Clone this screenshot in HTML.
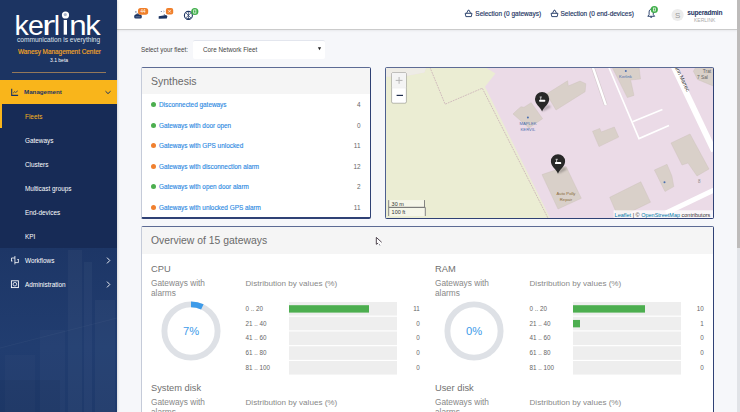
<!DOCTYPE html>
<html><head><meta charset="utf-8">
<style>
*{margin:0;padding:0;box-sizing:border-box}
html,body{width:740px;height:412px;overflow:hidden;background:#f6f7fa;font-family:"Liberation Sans",sans-serif;position:relative}
.a{position:absolute;white-space:nowrap;line-height:1}
#side{position:absolute;left:0;top:0;width:117px;height:412px;background:#1c3462;overflow:hidden;box-shadow:1px 0 2px rgba(0,0,0,0.12);z-index:2}
#top{position:absolute;left:117px;top:0;width:620px;height:30px;background:#fff;border-bottom:1px solid #cbcbcb;box-shadow:0 1px 2px rgba(0,0,0,0.06)}
#sb{position:absolute;left:737px;top:0;width:3px;height:412px;background:#e1e3e7}
#sbt{position:absolute;left:737px;top:0;width:3px;height:248px;background:#bdbbba}
.panel{position:absolute;background:#fff;border:1px solid #c5cbd9;border-top-color:#5d6b94;border-right:1.5px solid #2f4175;border-bottom:2px solid #2f4175;border-radius:2px;overflow:hidden}
.ph{position:absolute;left:0;top:0;right:0;background:#f5f5f5}
.lnk{color:#2a88e2;-webkit-text-stroke:0.12px #2a88e2}
.dot{position:absolute;width:5px;height:5px;border-radius:50%}
.g{background:#4cae4f}.o{background:#f0802f}
.num{color:#666;text-align:right}
.track{position:absolute;height:14px;background:#eeeeee}
.ttl{color:#707070}.sub{color:#888}.pct{color:#3d9be9}.lab{color:#666}
.mi{font-size:6.4px;color:#fff}.sel{font-size:6.5px;color:#1c3462;-webkit-text-stroke:0.15px #1c3462}
.bar{position:absolute;left:0;top:3px;height:7.5px;background:#4cae4f}
</style></head><body>
<div id="side">
  <div style="position:absolute;left:0;top:248px;width:117px;height:164px;background:linear-gradient(180deg,#1d3666 0%,#213d70 60%,#1f3a6b 100%)"></div>
  <svg class="a" style="left:0;top:248px" width="117" height="164" viewBox="0 248 117 164">
    <g fill="#fff">
      <rect x="68" y="250" width="14" height="162" opacity="0.03"/>
      <rect x="84" y="262" width="8" height="150" opacity="0.035"/>
      <rect x="95" y="300" width="20" height="112" opacity="0.03"/>
      <rect x="40" y="330" width="25" height="82" opacity="0.025"/>
      <rect x="5" y="355" width="30" height="57" opacity="0.02"/>
    </g>
    <path d="M0,348 L117,318" stroke="#fff" stroke-opacity="0.035" stroke-width="1"/>
    <rect x="0" y="380" width="60" height="32" fill="#000" opacity="0.04"/>
  </svg>
  <svg class="a" style="left:0;top:0" width="117" height="80" viewBox="0 0 117 80">
    <g font-family="Liberation Sans" font-size="28.5" fill="#fff">
      <text transform="translate(14.4,34.7)">k</text><text transform="translate(28,34.7)">e</text><text transform="translate(41.9,34.7) scale(1.4,1)">r</text><text transform="translate(53.7,34.7)">l</text><text transform="translate(69.2,34.7) scale(1.1,1)">n</text><text transform="translate(85.3,34.7) scale(1.08,1)">k</text>
    </g>
    <rect x="63.7" y="20" width="3.3" height="14.7" fill="#fff"/>
    <circle cx="65.5" cy="15" r="3.6" fill="#fff"/>
    <circle cx="65.3" cy="14.6" r="1.6" fill="#aab6cc"/>
  </svg>
  <div class="a" style="left:17px;top:37px;font-size:6.6px;color:#dfe3ec">communication is everything</div>
  <div class="a" style="left:18px;top:49.3px;font-size:6.4px;color:#f5a623;-webkit-text-stroke:0.15px #f5a623">Wanesy Management Center</div>
  <div class="a" style="left:50px;top:58px;font-size:5px;color:#fff">3.1 beta</div>
  <div style="position:absolute;left:12px;top:72px;width:94px;height:1px;background:#94785a"></div>
  <div style="position:absolute;left:0;top:80px;width:117px;height:24px;background:#f9b51b"></div>
  <div class="a" style="left:24px;top:88.5px;font-size:6.2px;color:#1c3462;font-weight:bold">Management</div>
  <div style="position:absolute;left:0;top:104px;width:117px;height:144px;background:#172b56"></div>
  <div style="position:absolute;left:0;top:104px;width:2px;height:24px;background:#f9b51b"></div>
  <div class="a mi" style="left:25px;top:114px;color:#f9b51b">Fleets</div>
  <div class="a mi" style="left:25px;top:138px">Gateways</div>
  <div class="a mi" style="left:25px;top:162px">Clusters</div>
  <div class="a mi" style="left:25px;top:186px">Multicast groups</div>
  <div class="a mi" style="left:25px;top:210px">End-devices</div>
  <div class="a mi" style="left:25px;top:234px">KPI</div>
  <div class="a mi" style="left:25px;top:258px">Workflows</div>
  <div class="a mi" style="left:25px;top:282px">Administration</div>
  <svg class="a" style="left:0;top:80px" width="117" height="220" viewBox="0 80 117 220">
    <g fill="none" stroke="#1c3462" stroke-width="1.1">
      <path d="M11.7,88.8 V95.4 H18.1"/>
      <path d="M13.2,93 L14.8,91.6 L15.6,92.5 L17.8,90.8" stroke-width="0.8"/>
      <path d="M105.5,91.2 L108,93.6 L110.6,91.2" stroke-width="1"/>
    </g>
    <g fill="none" stroke="#fff" stroke-width="0.9">
      <path d="M107,257.6 L109.8,260.5 L107,263.4"/>
      <path d="M107,281.6 L109.8,284.5 L107,287.4"/>
      <rect x="11.4" y="280.8" width="7" height="6.8"/>
      <circle cx="14.9" cy="284.2" r="1.8" stroke-width="0.8"/>
      <path d="M14.9,256 V264.4 M11.5,258 H14.9 M14.9,262.6 H18.4 M11.5,258 V261 M18.4,259.5 V262.6 M12.5,261 H11 M17.3,259.5 H18.8" stroke-width="0.8"/>
    </g>
  </svg>
</div>
<div id="top"></div>
<svg class="a" style="left:0;top:0" width="740" height="29" viewBox="0 0 740 29">
  <!-- icon 1 -->
  <rect x="134.2" y="14.6" width="7.6" height="4" rx="1.6" fill="#1c3462"/>
  <circle cx="135.9" cy="11.9" r="0.6" fill="#1c3462"/>
  <path d="M135.5,14.8 L137,13.6 H138.5 L139.2,14.8 Z" fill="#1c3462"/>
  <rect x="135.5" y="16.6" width="5" height="0.6" fill="#8fa0c0"/>
  <rect x="138" y="7.9" width="10.2" height="6.8" rx="2.6" fill="#f07f2a"/>
  <text x="143.1" y="12.9" font-size="4.6" fill="#fff" text-anchor="middle" font-family="Liberation Sans" >44</text>
  <!-- icon 2 -->
  <path d="M158.7,16.2 L166.3,14.9 L167.3,16.5 L166.8,18.6 L158.7,18.8 Z" fill="#1c3462"/>
  <circle cx="161.3" cy="11.5" r="0.6" fill="#5a6e98"/>
  <path d="M163,10.8 L164.7,11.5 L163,12.2" stroke="#a7b0c6" stroke-width="0.5" fill="none"/>
  <path d="M164.3,14 V15.5" stroke="#1c3462" stroke-width="0.6"/>
  <rect x="165.9" y="8.1" width="7.3" height="6.3" rx="2" fill="#f07f2a"/>
  <path d="M168.2,9.9 L170.9,12.6 M170.9,9.9 L168.2,12.6" stroke="#fff" stroke-width="0.7"/>
  <!-- icon 3 -->
  <circle cx="188.4" cy="15.4" r="4" fill="none" stroke="#1c3462" stroke-width="1.1"/>
  <path d="M185.8,12.8 L191,18 M191,12.8 L185.8,18 M188.4,11.5 V19.3" stroke="#1c3462" stroke-width="0.7"/>
  <rect x="186.5" y="18.4" width="3.8" height="1.4" fill="#1c3462"/>
  <circle cx="194.8" cy="11.5" r="3.6" fill="#3fae49"/>
  <rect x="193.7" y="9.9" width="2.2" height="3.2" fill="none" stroke="#fff" stroke-width="0.7"/>
  <!-- baskets -->
  <g fill="none" stroke="#1c3462" stroke-width="0.9">
    <path d="M465.2,13.3 H472 L471.3,16.6 H465.9 Z"/>
    <path d="M466.6,13.3 L468.1,10.2 H469.1 L470.6,13.3"/>
    <path d="M551.1,13.3 H557.9 L557.2,16.6 H551.8 Z"/>
    <path d="M552.5,13.3 L554,10.2 H555 L556.5,13.3"/>
  </g>
  <!-- bell -->
  <path d="M647.8,16.3 H654.6 L653.3,14.6 V12 C653.3,10.3 652.3,9.2 651.2,9.2 C650.1,9.2 649.1,10.3 649.1,12 V14.6 Z" fill="none" stroke="#1c3462" stroke-width="0.9"/>
  <path d="M650.3,17.2 H652.1" stroke="#1c3462" stroke-width="1"/>
  <circle cx="654.3" cy="9.5" r="3.6" fill="#3fae49"/>
  <rect x="653.3" y="8" width="2" height="3" fill="none" stroke="#fff" stroke-width="0.7"/>
  <!-- avatar -->
  <circle cx="677.6" cy="15" r="6.1" fill="#ececec"/>
  <text x="677.6" y="18" font-size="8" fill="#9a9a9a" text-anchor="middle" font-family="Liberation Sans">S</text>
</svg>
<div class="a sel" style="left:475.3px;top:10.8px">Selection (0 gateways)</div>
<div class="a sel" style="left:560.5px;top:10.8px">Selection (0 end-devices)</div>
<div class="a" style="left:687.3px;top:10.3px;font-size:6.6px;color:#1c3462;font-weight:bold;letter-spacing:-0.25px">superadmin</div>
<div class="a" style="left:694px;top:17.6px;font-size:5px;color:#aaa">KERLINK</div>
<div id="sb"></div><div id="sbt"></div>

<div class="a" style="left:141px;top:46.6px;font-size:6.3px;color:#444">Select your fleet:</div>
<div style="position:absolute;left:192.7px;top:39.5px;width:132px;height:19.3px;background:#fff;border-radius:2px;border-top:1px solid #e3e6ee"></div>
<svg class="a" style="left:317px;top:46px" width="5" height="5" viewBox="0 0 5 5"><path d="M0.9,1.2 H4.1 L2.5,4.3 Z" fill="#222"/></svg>
<div class="a" style="left:203px;top:46.6px;font-size:6.3px;color:#444">Core Network Fleet</div>

<div class="panel" style="left:141px;top:67px;width:230px;height:152px">
  <div class="ph" style="height:26px"></div>
  <div class="a" style="left:9px;top:8px;font-size:10.5px;color:#6a6a6a">Synthesis</div>
</div>

<div class="panel" style="left:385px;top:67px;width:329px;height:152px;background:#ebdbe7;border-left-color:#4d5f8f"></div>
<!--MAP-->
<svg class="a" style="left:386px;top:68px" width="327" height="150" viewBox="386 68 327 150">
<rect x="386" y="68" width="327" height="150" fill="#ebdbe7"/>
<polygon points="386,76.8 407,75.7 424.3,72.5 426.5,67 485,67 495.4,73.5 485,86.7 550,218 386,218" fill="#ebedd3"/>
<polygon points="386,67 426.5,67 424.3,72.5 407,75.7 386,76.8" fill="#eeece6"/>
<polyline points="429.8,67 445.1,104.2 482.3,88.2 548.4,219" fill="none" stroke="#c9afb6" stroke-width="0.8" stroke-dasharray="1.8 0.9"/>
<g fill="#d9d0c9" stroke="#cbbfb8" stroke-width="0.4">
<polygon points="513,114 517.4,109.7 521,106.7 524,107.3 531.2,102.7 542.6,118.7 529,128"/>
<polygon points="546.5,94 567.6,80.8 568.3,86 580,81.1 585.8,83.7 585.1,91.7 556,110"/>
<polygon points="592.5,131.3 599.8,128.4 601.2,132 614.3,127 618.7,137.1 599,146.6"/>
<polygon points="612,67 639,67 640.5,79 630.6,80 634,95.4 627.3,97.6 618.6,80"/>
<polygon points="696,67 714,67 714,86.3 697.6,79.5 693.4,71.2"/>
<polygon points="542,174.6 566,166.5 581.3,198.3 558,209"/>
<polygon points="671,143 690,134 709,169 697,176 688,163 682,165"/>
<polygon points="654.4,170 667,164.3 671.9,176 673.8,186.6 665,191.5"/>
<polygon points="609.7,197.3 640.8,181.8 650.5,202.2 618.5,217.7"/>
</g>
<g stroke-linecap="butt" fill="none">
<line x1="592.7" y1="67" x2="605.8" y2="105.2" stroke="#d4c8cc" stroke-width="3.6"/>
<line x1="592.7" y1="67" x2="605.8" y2="105.2" stroke="#fff" stroke-width="2.4"/>
<polyline points="608.7,67 639,138.6 669,125.5" stroke="#fff" stroke-width="1.6"/>
<line x1="632.5" y1="121.8" x2="662.4" y2="109.5" stroke="#fff" stroke-width="1.6"/>
<line x1="673.5" y1="66" x2="714" y2="151" stroke="#fff" stroke-width="6"/>
<line x1="666" y1="213" x2="714" y2="190" stroke="#fff" stroke-width="5"/>
</g>
<circle cx="527.9" cy="117.5" r="1" fill="#4b6fb0"/>
<circle cx="625.8" cy="71" r="1" fill="#4b6fb0"/>
<circle cx="664.5" cy="182.3" r="1" fill="#4b6fb0"/>
<text x="528" y="125" font-size="4.2" fill="#4b6fb0" text-anchor="middle" font-family="Liberation Sans">MAPLEK</text>
<text x="528" y="130.5" font-size="4.2" fill="#4b6fb0" text-anchor="middle" font-family="Liberation Sans">KERVIL</text>
<text x="625.5" y="77.5" font-size="4.2" fill="#4b6fb0" text-anchor="middle" font-family="Liberation Sans">Kerlink</text>
<text x="566" y="194.5" font-size="4.2" fill="#8a6a3a" text-anchor="middle" font-family="Liberation Sans">Auto Polly</text>
<text x="566" y="200.5" font-size="4.2" fill="#8a6a3a" text-anchor="middle" font-family="Liberation Sans">Repair</text>
<text x="702.8" y="72.8" font-size="4.8" fill="#666" font-family="Liberation Sans">Trat</text>
<text x="697" y="78.6" font-size="4.8" fill="#666" font-family="Liberation Sans">7 Sal</text>
<text x="0" y="0" font-size="5.5" fill="#2a2a2a" font-family="Liberation Sans" transform="translate(674.6,66.9) rotate(64.5)">ann Marrec</text>
<text x="698" y="183" font-size="4.5" fill="#888" font-family="Liberation Sans">8</text>
<!-- markers -->
<defs><filter id="bl" x="-50%" y="-50%" width="200%" height="200%"><feGaussianBlur stdDeviation="0.9"/></filter></defs>
<g transform="translate(542.1,111.4)">
<path d="M0.5,0 L9,-4.5 L6.5,-6.5 L1,-3 Z" fill="rgba(0,0,0,0.28)" filter="url(#bl)"/>
<path d="M0,0 C-2,-4.4 -7.1,-7.4 -7.1,-12.4 A7.1,7.1 0 1 1 7.1,-12.4 C7.1,-7.4 2,-4.4 0,0 Z" fill="#282828"/>
<rect x="-3" y="-11.6" width="6.2" height="2" rx="0.7" fill="#fff"/>
<path d="M-1.4,-11.6 V-14.2 M-2.4,-14.4 H-0.2" stroke="#fff" stroke-width="0.7" fill="none"/>
</g>
<g transform="translate(558,173.7)">
<path d="M0.5,0 L9,-4.5 L6.5,-6.5 L1,-3 Z" fill="rgba(0,0,0,0.28)" filter="url(#bl)"/>
<path d="M0,0 C-2,-4.4 -7.1,-7.4 -7.1,-12.4 A7.1,7.1 0 1 1 7.1,-12.4 C7.1,-7.4 2,-4.4 0,0 Z" fill="#282828"/>
<rect x="-3" y="-11.6" width="6.2" height="2" rx="0.7" fill="#fff"/>
<path d="M-1.4,-11.6 V-14.2 M-2.4,-14.4 H-0.2" stroke="#fff" stroke-width="0.7" fill="none"/>
</g>
<!-- zoom control -->
<rect x="391.6" y="72.6" width="14.8" height="30.6" rx="1.5" fill="#fff" stroke="rgba(0,0,0,0.25)" stroke-width="1"/>
<line x1="391.6" y1="87.8" x2="406.4" y2="87.8" stroke="#ddd" stroke-width="0.6"/>
<rect x="392.1" y="73" width="13.8" height="14.5" fill="#f4f4f4"/>
<path d="M395.7,80.4 H402.5 M399.1,77 V83.8" stroke="#b5b5b5" stroke-width="1"/>
<rect x="396.6" y="94.8" width="6.4" height="1.2" fill="#1f2d4d"/>
<!-- scale -->
<rect x="388.2" y="200.1" width="36.5" height="7.3" fill="rgba(255,255,255,0.5)"/>
<rect x="388.2" y="207.4" width="37.3" height="8.6" fill="rgba(255,255,255,0.5)"/>
<path d="M388.7,200.1 V207.4 H424.5 V200.1" fill="none" stroke="#777" stroke-width="0.9"/>
<path d="M388.7,207.4 V216 M388.7,207.4 H425.3 V216" fill="none" stroke="#777" stroke-width="0.9"/>
<text x="391.6" y="206" font-size="5.5" fill="#333" font-family="Liberation Sans">30 m</text>
<text x="391.6" y="214.3" font-size="5.5" fill="#333" font-family="Liberation Sans">100 ft</text>
<!-- attribution -->
<rect x="613.6" y="210.3" width="99.4" height="8" fill="rgba(255,255,255,0.75)"/>
<text x="614.6" y="216.6" font-size="5.5" fill="#333" font-family="Liberation Sans"><tspan fill="#0078a8">Leaflet</tspan> | © <tspan fill="#0078a8">OpenStreetMap</tspan> contributors</text>
</svg>

<!--/MAP-->

<div class="panel" style="left:141px;top:226px;width:573px;height:200px">
  <div class="ph" style="height:27px"></div>
  <div class="a" style="left:9px;top:9px;font-size:10.4px;color:#6a6a6a">Overview of 15 gateways</div>
</div>
<!--SYNTH-->
<div class="dot g" style="left:151px;top:102.3px"></div>
<div class="a lnk" style="left:159px;top:102.4px;font-size:6.4px">Disconnected gateways</div>
<div class="a num" style="left:320px;width:40.5px;top:102.4px;font-size:6.4px">4</div>
<div class="dot g" style="left:151px;top:122.8px"></div>
<div class="a lnk" style="left:159px;top:122.9px;font-size:6.4px">Gateways with door open</div>
<div class="a num" style="left:320px;width:40.5px;top:122.9px;font-size:6.4px">0</div>
<div class="dot o" style="left:151px;top:143.3px"></div>
<div class="a lnk" style="left:159px;top:143.4px;font-size:6.4px">Gateways with GPS unlocked</div>
<div class="a num" style="left:320px;width:40.5px;top:143.4px;font-size:6.4px">11</div>
<div class="dot o" style="left:151px;top:163.8px"></div>
<div class="a lnk" style="left:159px;top:163.9px;font-size:6.4px">Gateways with disconnection alarm</div>
<div class="a num" style="left:320px;width:40.5px;top:163.9px;font-size:6.4px">12</div>
<div class="dot g" style="left:151px;top:184.3px"></div>
<div class="a lnk" style="left:159px;top:184.4px;font-size:6.4px">Gateways with open door alarm</div>
<div class="a num" style="left:320px;width:40.5px;top:184.4px;font-size:6.4px">2</div>
<div class="dot o" style="left:151px;top:204.8px"></div>
<div class="a lnk" style="left:159px;top:204.9px;font-size:6.4px">Gateways with unlocked GPS alarm</div>
<div class="a num" style="left:320px;width:40.5px;top:204.9px;font-size:6.4px">11</div>
<!--OV-->
<div class="a ttl" style="left:151px;top:264.6px;font-size:9.3px">CPU</div>
<div class="a sub" style="left:151px;top:278.1px;font-size:8.3px;line-height:10px;white-space:normal;width:70px">Gateways with<br>alarms</div>
<div class="a sub" style="left:245.5px;top:279.6px;font-size:8.1px">Distribution by values (%)</div>
<svg class="a" style="left:161.2px;top:301.1px" width="60" height="60" viewBox="0 0 60 60"><circle cx="30" cy="30" r="26.6" fill="none" stroke="#dee1e6" stroke-width="5.9"/><circle cx="30" cy="30" r="26.6" fill="none" stroke="#3d9be9" stroke-width="5.9" stroke-dasharray="11.70 200" transform="rotate(-90 30 30)"/></svg>
<div class="a pct" style="left:171.2px;width:40px;text-align:center;top:326.2px;font-size:11.2px">7%</div>
<div class="a lab" style="left:245.6px;top:305.9px;font-size:6.3px">0 .. 20</div>
<div class="a lab" style="left:389.7px;width:30px;text-align:right;top:305.9px;font-size:6.3px">11</div>
<div class="a lab" style="left:245.6px;top:320.6px;font-size:6.3px">21 .. 40</div>
<div class="a lab" style="left:389.7px;width:30px;text-align:right;top:320.6px;font-size:6.3px">0</div>
<div class="a lab" style="left:245.6px;top:335.4px;font-size:6.3px">41 .. 60</div>
<div class="a lab" style="left:389.7px;width:30px;text-align:right;top:335.4px;font-size:6.3px">0</div>
<div class="a lab" style="left:245.6px;top:350.1px;font-size:6.3px">61 .. 80</div>
<div class="a lab" style="left:389.7px;width:30px;text-align:right;top:350.1px;font-size:6.3px">0</div>
<div class="a lab" style="left:245.6px;top:364.9px;font-size:6.3px">81 .. 100</div>
<div class="a lab" style="left:389.7px;width:30px;text-align:right;top:364.9px;font-size:6.3px">0</div>
<svg class="a" style="left:288.8px;top:302.0px" width="108" height="74" viewBox="0 0 108 74"><rect x="0" y="0.00" width="108" height="13.6" fill="#eeeeee"/><rect x="0" y="3.20" width="80" height="7.4" fill="#4cae4f"/><rect x="0" y="14.75" width="108" height="13.6" fill="#eeeeee"/><rect x="0" y="29.50" width="108" height="13.6" fill="#eeeeee"/><rect x="0" y="44.25" width="108" height="13.6" fill="#eeeeee"/><rect x="0" y="59.00" width="108" height="13.6" fill="#eeeeee"/></svg>
<div class="a ttl" style="left:435px;top:264.6px;font-size:9.3px">RAM</div>
<div class="a sub" style="left:435px;top:278.1px;font-size:8.3px;line-height:10px;white-space:normal;width:70px">Gateways with<br>alarms</div>
<div class="a sub" style="left:529.5px;top:279.6px;font-size:8.1px">Distribution by values (%)</div>
<svg class="a" style="left:444.2px;top:301.1px" width="60" height="60" viewBox="0 0 60 60"><circle cx="30" cy="30" r="26.6" fill="none" stroke="#dee1e6" stroke-width="5.9"/></svg>
<div class="a pct" style="left:454.2px;width:40px;text-align:center;top:326.2px;font-size:11.2px">0%</div>
<div class="a lab" style="left:529.6px;top:305.9px;font-size:6.3px">0 .. 20</div>
<div class="a lab" style="left:673.7px;width:30px;text-align:right;top:305.9px;font-size:6.3px">10</div>
<div class="a lab" style="left:529.6px;top:320.6px;font-size:6.3px">21 .. 40</div>
<div class="a lab" style="left:673.7px;width:30px;text-align:right;top:320.6px;font-size:6.3px">1</div>
<div class="a lab" style="left:529.6px;top:335.4px;font-size:6.3px">41 .. 60</div>
<div class="a lab" style="left:673.7px;width:30px;text-align:right;top:335.4px;font-size:6.3px">0</div>
<div class="a lab" style="left:529.6px;top:350.1px;font-size:6.3px">61 .. 80</div>
<div class="a lab" style="left:673.7px;width:30px;text-align:right;top:350.1px;font-size:6.3px">0</div>
<div class="a lab" style="left:529.6px;top:364.9px;font-size:6.3px">81 .. 100</div>
<div class="a lab" style="left:673.7px;width:30px;text-align:right;top:364.9px;font-size:6.3px">0</div>
<svg class="a" style="left:572.8px;top:302.0px" width="108" height="74" viewBox="0 0 108 74"><rect x="0" y="0.00" width="108" height="13.6" fill="#eeeeee"/><rect x="0" y="3.20" width="72" height="7.4" fill="#4cae4f"/><rect x="0" y="14.75" width="108" height="13.6" fill="#eeeeee"/><rect x="0" y="17.95" width="7" height="7.4" fill="#4cae4f"/><rect x="0" y="29.50" width="108" height="13.6" fill="#eeeeee"/><rect x="0" y="44.25" width="108" height="13.6" fill="#eeeeee"/><rect x="0" y="59.00" width="108" height="13.6" fill="#eeeeee"/></svg>
<div class="a ttl" style="left:151px;top:383.5px;font-size:9.3px">System disk</div>
<div class="a sub" style="left:151px;top:397.0px;font-size:8.3px;line-height:10px;white-space:normal;width:70px">Gateways with<br>alarms</div>
<div class="a sub" style="left:245.5px;top:398.5px;font-size:8.1px">Distribution by values (%)</div>
<svg class="a" style="left:161.2px;top:420.0px" width="60" height="60" viewBox="0 0 60 60"><circle cx="30" cy="30" r="26.6" fill="none" stroke="#dee1e6" stroke-width="5.9"/></svg>
<div class="a pct" style="left:171.2px;width:40px;text-align:center;top:445.1px;font-size:11.2px">0%</div>
<div class="a lab" style="left:245.6px;top:424.8px;font-size:6.3px">0 .. 20</div>
<div class="a lab" style="left:389.7px;width:30px;text-align:right;top:424.8px;font-size:6.3px">0</div>
<div class="a lab" style="left:245.6px;top:439.5px;font-size:6.3px">21 .. 40</div>
<div class="a lab" style="left:389.7px;width:30px;text-align:right;top:439.5px;font-size:6.3px">0</div>
<div class="a lab" style="left:245.6px;top:454.3px;font-size:6.3px">41 .. 60</div>
<div class="a lab" style="left:389.7px;width:30px;text-align:right;top:454.3px;font-size:6.3px">0</div>
<div class="a lab" style="left:245.6px;top:469.0px;font-size:6.3px">61 .. 80</div>
<div class="a lab" style="left:389.7px;width:30px;text-align:right;top:469.0px;font-size:6.3px">0</div>
<div class="a lab" style="left:245.6px;top:483.8px;font-size:6.3px">81 .. 100</div>
<div class="a lab" style="left:389.7px;width:30px;text-align:right;top:483.8px;font-size:6.3px">0</div>
<svg class="a" style="left:288.8px;top:420.9px" width="108" height="74" viewBox="0 0 108 74"><rect x="0" y="0.00" width="108" height="13.6" fill="#eeeeee"/><rect x="0" y="14.75" width="108" height="13.6" fill="#eeeeee"/><rect x="0" y="29.50" width="108" height="13.6" fill="#eeeeee"/><rect x="0" y="44.25" width="108" height="13.6" fill="#eeeeee"/><rect x="0" y="59.00" width="108" height="13.6" fill="#eeeeee"/></svg>
<div class="a ttl" style="left:435px;top:383.5px;font-size:9.3px">User disk</div>
<div class="a sub" style="left:435px;top:397.0px;font-size:8.3px;line-height:10px;white-space:normal;width:70px">Gateways with<br>alarms</div>
<div class="a sub" style="left:529.5px;top:398.5px;font-size:8.1px">Distribution by values (%)</div>
<svg class="a" style="left:444.2px;top:420.0px" width="60" height="60" viewBox="0 0 60 60"><circle cx="30" cy="30" r="26.6" fill="none" stroke="#dee1e6" stroke-width="5.9"/></svg>
<div class="a pct" style="left:454.2px;width:40px;text-align:center;top:445.1px;font-size:11.2px">0%</div>
<div class="a lab" style="left:529.6px;top:424.8px;font-size:6.3px">0 .. 20</div>
<div class="a lab" style="left:673.7px;width:30px;text-align:right;top:424.8px;font-size:6.3px">0</div>
<div class="a lab" style="left:529.6px;top:439.5px;font-size:6.3px">21 .. 40</div>
<div class="a lab" style="left:673.7px;width:30px;text-align:right;top:439.5px;font-size:6.3px">0</div>
<div class="a lab" style="left:529.6px;top:454.3px;font-size:6.3px">41 .. 60</div>
<div class="a lab" style="left:673.7px;width:30px;text-align:right;top:454.3px;font-size:6.3px">0</div>
<div class="a lab" style="left:529.6px;top:469.0px;font-size:6.3px">61 .. 80</div>
<div class="a lab" style="left:673.7px;width:30px;text-align:right;top:469.0px;font-size:6.3px">0</div>
<div class="a lab" style="left:529.6px;top:483.8px;font-size:6.3px">81 .. 100</div>
<div class="a lab" style="left:673.7px;width:30px;text-align:right;top:483.8px;font-size:6.3px">0</div>
<svg class="a" style="left:572.8px;top:420.9px" width="108" height="74" viewBox="0 0 108 74"><rect x="0" y="0.00" width="108" height="13.6" fill="#eeeeee"/><rect x="0" y="14.75" width="108" height="13.6" fill="#eeeeee"/><rect x="0" y="29.50" width="108" height="13.6" fill="#eeeeee"/><rect x="0" y="44.25" width="108" height="13.6" fill="#eeeeee"/><rect x="0" y="59.00" width="108" height="13.6" fill="#eeeeee"/></svg>
<svg class="a" style="left:370px;top:230px" width="20" height="20" viewBox="370 230 20 20">
<path d="M376.3,237.4 L376.3,244.3 L378,243 L379.6,245.3 L380.7,244.7 L379.5,242.5 L381.7,242.3 Z" fill="#fff" stroke="#fff" stroke-width="1.2" opacity="0.9"/>
<path d="M376.3,237.4 V244.3 L378.2,243.1 M376.3,237.4 L381.7,242.3" fill="none" stroke="#3a2f3a" stroke-width="0.9"/>
<path d="M379.2,244 L380,245.6" stroke="#7a7f8a" stroke-width="0.9"/>
</svg>
</body></html>
